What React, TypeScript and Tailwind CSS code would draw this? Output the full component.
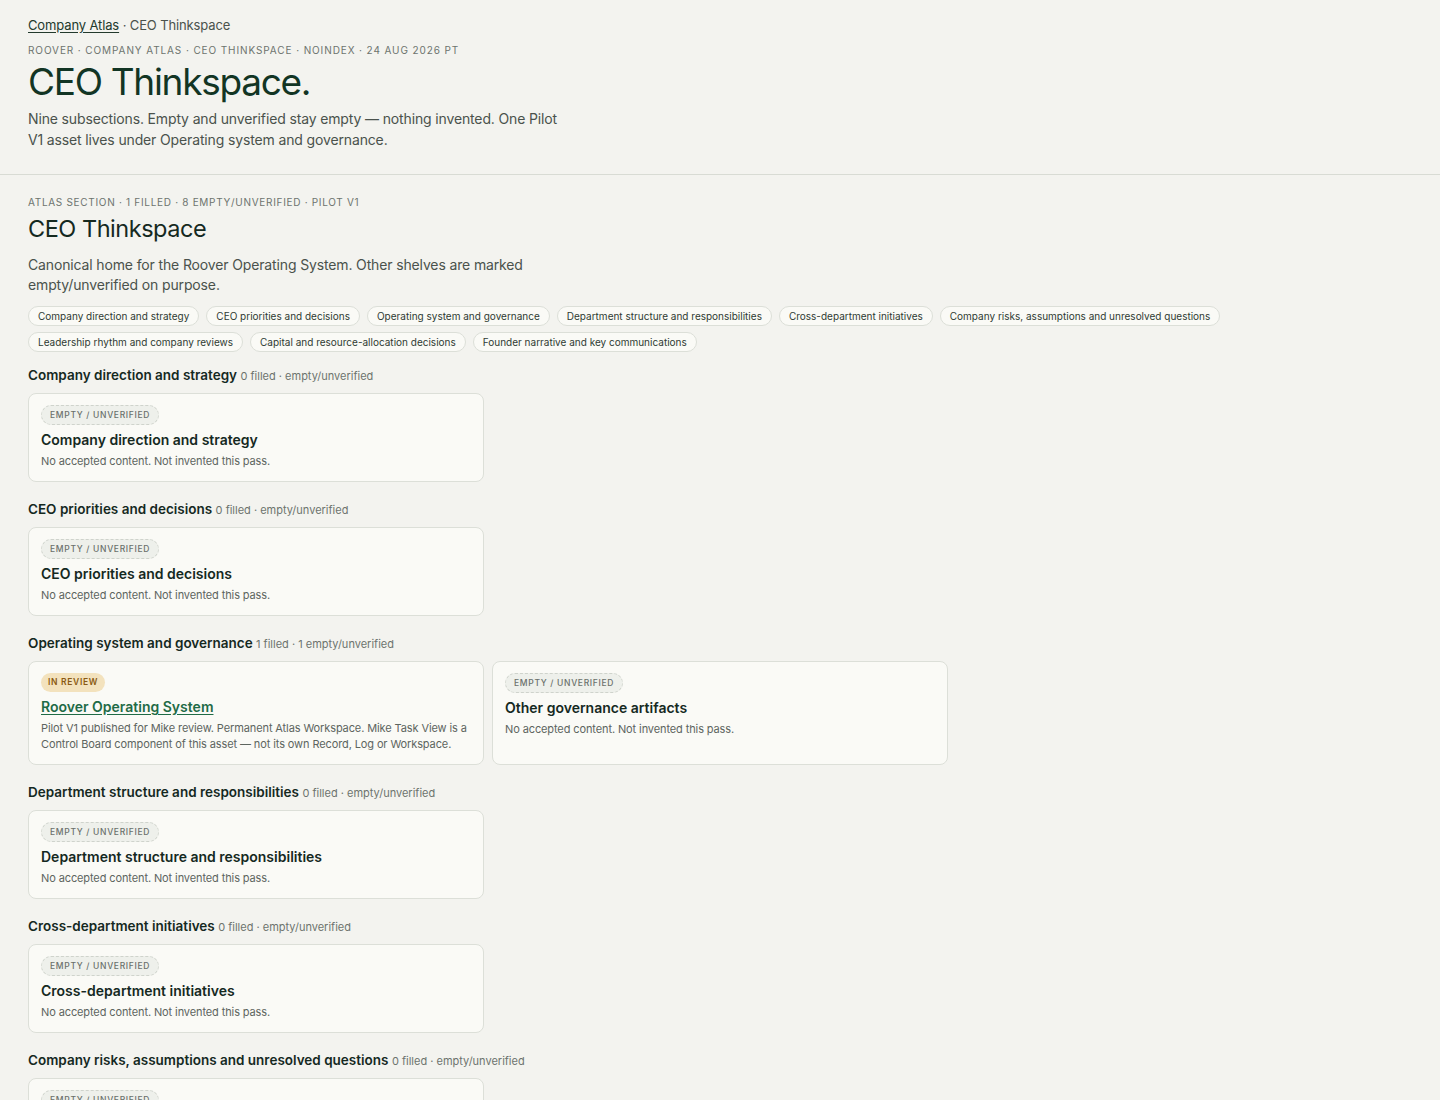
import React from "react";

type Item = {
  status: "empty" | "review";
  title: string;
  body: string;
  link?: boolean;
};

type Shelf = {
  name: string;
  meta: string;
  items: Item[];
};

const EMPTY_BODY = "No accepted content. Not invented this pass.";

const shelves: Shelf[] = [
  {
    name: "Company direction and strategy",
    meta: "0 filled · empty/unverified",
    items: [{ status: "empty", title: "Company direction and strategy", body: EMPTY_BODY }],
  },
  {
    name: "CEO priorities and decisions",
    meta: "0 filled · empty/unverified",
    items: [{ status: "empty", title: "CEO priorities and decisions", body: EMPTY_BODY }],
  },
  {
    name: "Operating system and governance",
    meta: "1 filled · 1 empty/unverified",
    items: [
      {
        status: "review",
        title: "Roover Operating System",
        link: true,
        body: "Pilot V1 published for Mike review. Permanent Atlas Workspace. Mike Task View is a Control Board component of this asset — not its own Record, Log or Workspace.",
      },
      { status: "empty", title: "Other governance artifacts", body: EMPTY_BODY },
    ],
  },
  {
    name: "Department structure and responsibilities",
    meta: "0 filled · empty/unverified",
    items: [{ status: "empty", title: "Department structure and responsibilities", body: EMPTY_BODY }],
  },
  {
    name: "Cross-department initiatives",
    meta: "0 filled · empty/unverified",
    items: [{ status: "empty", title: "Cross-department initiatives", body: EMPTY_BODY }],
  },
  {
    name: "Company risks, assumptions and unresolved questions",
    meta: "0 filled · empty/unverified",
    items: [{ status: "empty", title: "Company risks, assumptions and unresolved questions", body: EMPTY_BODY }],
  },
  {
    name: "Leadership rhythm and company reviews",
    meta: "0 filled · empty/unverified",
    items: [{ status: "empty", title: "Leadership rhythm and company reviews", body: EMPTY_BODY }],
  },
  {
    name: "Capital and resource-allocation decisions",
    meta: "0 filled · empty/unverified",
    items: [{ status: "empty", title: "Capital and resource-allocation decisions", body: EMPTY_BODY }],
  },
  {
    name: "Founder narrative and key communications",
    meta: "0 filled · empty/unverified",
    items: [{ status: "empty", title: "Founder narrative and key communications", body: EMPTY_BODY }],
  },
];

function StatusBadge({ status }: { status: Item["status"] }) {
  if (status === "review") {
    return (
      <span className="flex h-[19px] w-fit items-center rounded-full bg-[#f3e2bd] px-[7px] text-[8.5px] font-semibold uppercase tracking-[0.08em] text-[#8a5a12]">
        In review
      </span>
    );
  }
  return (
    <span className="flex h-[20px] w-fit items-center rounded-full border border-dashed border-[#cfd3cc] bg-[#eef0eb] px-[8px] text-[8.5px] font-medium uppercase tracking-[0.08em] text-[#6b716b]">
      Empty / Unverified
    </span>
  );
}

function Card({ item }: { item: Item }) {
  return (
    <div className="rounded-[8px] border border-[#dcdfd8] bg-[#fafaf6] px-[12px] pb-[12px] pt-[11px]">
      <StatusBadge status={item.status} />
      {item.link ? (
        <a
          href="#"
          className="mt-[5px] block w-fit text-[14px] font-semibold leading-[20px] text-[#1f6b46] underline underline-offset-2"
        >
          {item.title}
        </a>
      ) : (
        <h4 className="mt-[5px] text-[14px] font-semibold leading-[20px] text-[#15291f]">{item.title}</h4>
      )}
      <p className="mt-[3px] text-[11px] leading-[16px] tracking-[-0.01em] text-[#5d655f]">{item.body}</p>
    </div>
  );
}

export default function App() {
  return (
    <div
      className="min-h-screen bg-[#f3f3ef] text-[#15291f]"
      style={{ fontFamily: "Inter, 'Noto Sans', sans-serif" }}
    >
      {/* Page header */}
      <header className="border-b border-[#d8dbd4] px-[28px] pb-[24px] pt-[16px]">
        <nav className="text-[13px] leading-[18px] tracking-[-0.01em] text-[#4a524c]">
          <a href="#" className="text-[#233a2d] underline underline-offset-2">
            Company Atlas
          </a>{" "}
          · CEO Thinkspace
        </nav>
        <p className="mt-[9px] text-[10px] uppercase leading-[14px] tracking-[0.09em] text-[#6d736e]">
          Roover · Company Atlas · CEO Thinkspace · noindex · 24 Aug 2026 PT
        </p>
        <h1 className="mt-[4px] text-[37px] font-normal leading-[42px] tracking-[-0.035em] text-[#123524]">
          CEO Thinkspace.
        </h1>
        <p className="mt-[5px] max-w-[535px] text-[14px] leading-[21px] tracking-[-0.01em] text-[#4a524c]">
          Nine subsections. Empty and unverified stay empty — nothing invented. One Pilot V1 asset lives under
          Operating system and governance.
        </p>
      </header>

      {/* Section */}
      <main className="px-[28px] pt-[20px]">
        <p className="text-[10px] uppercase leading-[14px] tracking-[0.07em] text-[#6d736e]">
          Atlas section · 1 filled · 8 empty/unverified · Pilot V1
        </p>
        <h2 className="mt-[5px] text-[23.5px] font-normal leading-[30px] tracking-[-0.02em] text-[#15291f]">
          CEO Thinkspace
        </h2>
        <p className="mt-[11px] max-w-[500px] text-[14px] leading-[20px] tracking-[-0.01em] text-[#4a524c]">
          Canonical home for the Roover Operating System. Other shelves are marked empty/unverified on purpose.
        </p>

        <div className="mt-[11px] flex max-w-[1240px] flex-wrap gap-x-[7px] gap-y-[6px]">
          {shelves.map((s) => (
            <a
              key={s.name}
              href="#"
              className="inline-flex h-[20px] items-center rounded-full border border-[#dcdfd8] bg-[#fafaf6] px-[9px] text-[10px] text-[#2f3a33]"
            >
              {s.name}
            </a>
          ))}
        </div>

        <div className="mt-[14px] flex flex-col gap-[18px] pb-[40px]">
          {shelves.map((s) => (
            <section key={s.name}>
              <h3 className="text-[13.5px] font-semibold leading-[18px] text-[#15291f]">
                {s.name} <span className="text-[11px] font-normal text-[#6d736e]">{s.meta}</span>
              </h3>
              <div className="mt-[8px] grid grid-cols-[456px_456px] gap-[8px]">
                {s.items.map((it) => (
                  <Card key={it.title} item={it} />
                ))}
              </div>
            </section>
          ))}
        </div>
      </main>
    </div>
  );
}
